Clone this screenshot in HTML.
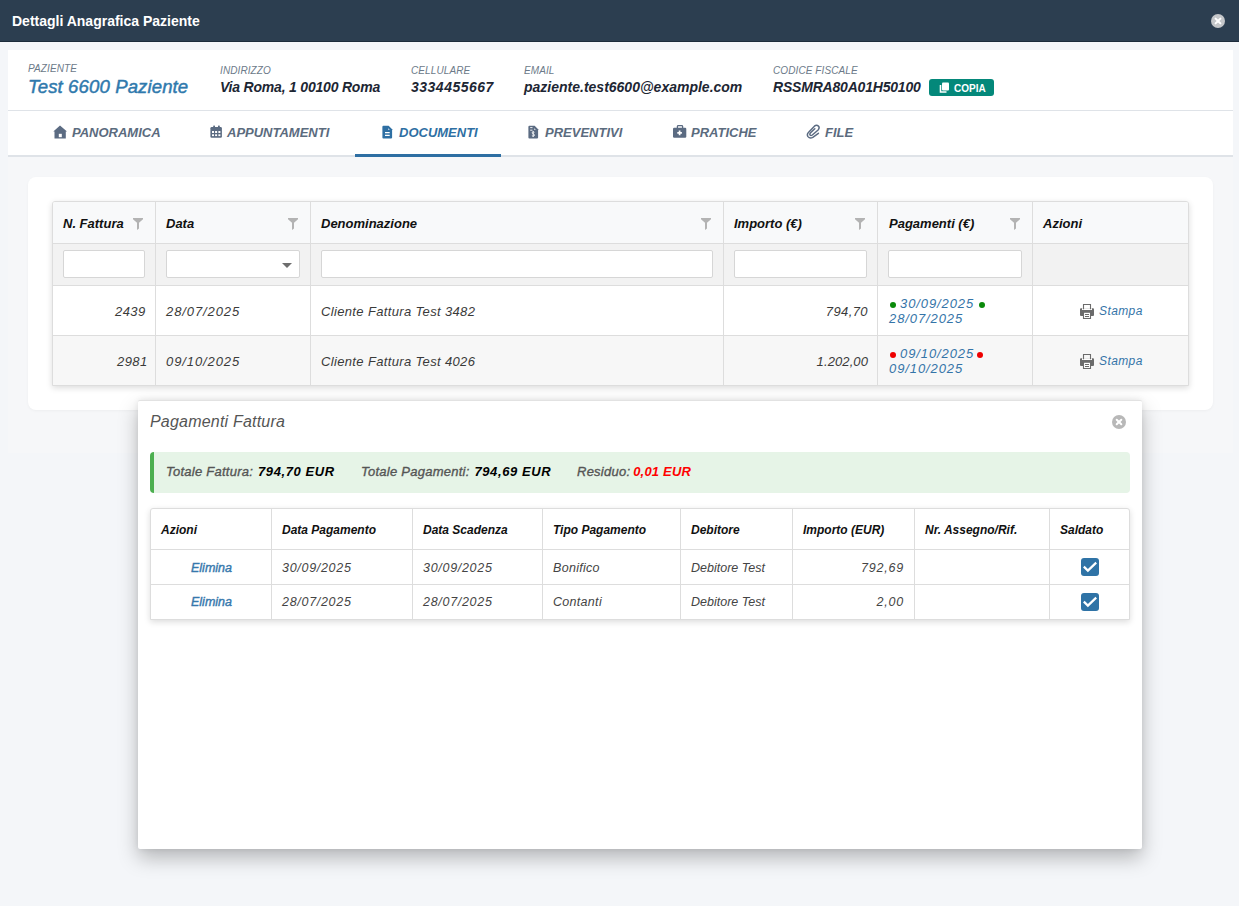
<!DOCTYPE html>
<html><head><meta charset="utf-8">
<style>
*{box-sizing:border-box;margin:0;padding:0}
html,body{width:1239px;height:906px;overflow:hidden}
body{background:#f4f6f9;font-family:"Liberation Sans",sans-serif;position:relative;color:#222}
.a{position:absolute;white-space:nowrap}
svg{position:absolute;display:block}
#hdr{left:0;top:0;width:1239px;height:42px;background:#2c3e50;border-bottom:1px solid #1c2b3a}
.lbl{font-size:10px;line-height:10px;font-style:italic;color:#6c7a89;text-transform:uppercase;letter-spacing:0.1px}
.val{font-size:14px;line-height:14px;font-style:italic;font-weight:bold;color:#1d2633}
.tab{font-size:13px;line-height:13px;font-style:italic;font-weight:bold;color:#5b6b7e;top:126px}
.th{font-size:13px;line-height:13px;font-style:italic;font-weight:bold;color:#111;top:217px}
.td{font-size:13px;line-height:13px;font-style:italic;color:#3a3a3a;letter-spacing:0.4px}
.lnk{color:#3474a8 !important}
.vl{width:1px;background:#dddddd}
.hl{height:1px;background:#dddddd}
.inp{background:#fff;border:1px solid #d6d6d6;border-radius:2px;height:28px;top:250px}
.mth{font-size:12px;line-height:12px;font-style:italic;font-weight:bold;color:#111;top:524px}
.mtd{font-size:12.5px;line-height:13px;font-style:italic;color:#444;letter-spacing:0.3px}
</style></head><body>
<!-- header -->
<div id="hdr" class="a"></div>
<div class="a" style="left:12px;top:14px;font-size:14px;line-height:14px;font-weight:bold;color:#fff">Dettagli Anagrafica Paziente</div>
<svg style="left:1210px;top:13px" width="16" height="16" viewBox="0 0 16 16"><circle cx="8" cy="8" r="7" fill="#c4c6c9"/><path d="M5.6 5.6L10.4 10.4M10.4 5.6L5.6 10.4" stroke="#fff" stroke-width="2" stroke-linecap="round"/></svg>

<!-- patient card -->
<div class="a" style="left:8px;top:50px;width:1225px;height:107px;background:#fff"></div>
<div class="a" style="left:8px;top:110px;width:1225px;height:1px;background:#dfe3e8"></div>
<div class="a" style="left:8px;top:155px;width:1225px;height:2px;background:#dfe3e8"></div>
<div class="a" style="left:355px;top:154px;width:146px;height:3px;background:#2e6fa3"></div>

<div class="a lbl" style="left:28px;top:64px">Paziente</div>
<div class="a" style="left:28px;top:77px;font-size:18.6px;line-height:19px;font-style:italic;color:#2f79ad;-webkit-text-stroke:0.45px #2f79ad;letter-spacing:0.1px">Test 6600 Paziente</div>
<div class="a lbl" style="left:220px;top:66px">Indirizzo</div>
<div class="a val" style="left:220px;top:80px;letter-spacing:-0.2px">Via Roma, 1 00100 Roma</div>
<div class="a lbl" style="left:411px;top:66px">Cellulare</div>
<div class="a val" style="left:411px;top:80px;letter-spacing:0.5px">3334455667</div>
<div class="a lbl" style="left:524px;top:66px">Email</div>
<div class="a val" style="left:524px;top:80px">paziente.test6600@example.com</div>
<div class="a lbl" style="left:773px;top:66px">Codice Fiscale</div>
<div class="a val" style="left:773px;top:80px;letter-spacing:-0.2px">RSSMRA80A01H50100</div>
<div class="a" style="left:929px;top:79px;width:65px;height:17px;background:#04887a;border-radius:3px"></div>
<svg style="left:939px;top:82px" width="11" height="11" viewBox="0 0 11 11"><rect x="3" y="0.5" width="7" height="8" rx="1" fill="#fff"/><path d="M1.5 3v7h6" fill="none" stroke="#fff" stroke-width="1.6"/></svg>
<div class="a" style="left:954px;top:84px;font-size:10px;line-height:10px;font-weight:bold;color:#fff">COPIA</div>

<!-- tabs -->
<svg style="left:53px;top:125px" width="15" height="14" viewBox="0 0 15 14"><path d="M7 0.5L0.3 6.5H1.5V13.5H12.8V6.5H14L7 0.5Z" fill="#5b6b82"/><rect x="5.8" y="8.8" width="3" height="3.4" fill="#fff"/></svg>
<div class="a tab" style="left:72px">PANORAMICA</div>
<svg style="left:210px;top:125px" width="12" height="13" viewBox="0 0 12 13"><rect x="0.4" y="2" width="11.5" height="10.8" rx="1.3" fill="#5b6b82"/><rect x="3.2" y="0.4" width="1.8" height="3" rx="0.6" fill="#5b6b82"/><rect x="8" y="0.4" width="1.8" height="3" rx="0.6" fill="#5b6b82"/><g fill="#fff"><rect x="2" y="6" width="2" height="2"/><rect x="5.1" y="6" width="2" height="2"/><rect x="8.4" y="6" width="2" height="2"/><rect x="2" y="9.3" width="2" height="1.8"/><rect x="5.1" y="9.3" width="2" height="1.8"/><rect x="8.4" y="9.3" width="2" height="1.8"/></g></svg>
<div class="a tab" style="left:227px">APPUNTAMENTI</div>
<svg style="left:382px;top:125px" width="11" height="14" viewBox="0 0 11 14"><path d="M1.4 0.8H6.6L10.1 4.3V12.4Q10.1 13.5 9 13.5H1.4Q0.4 13.5 0.4 12.4V1.9Q0.4 0.8 1.4 0.8Z" fill="#2e6fa3"/><path d="M6.2 3.2L7.8 4.7H6.2Z" fill="#fff"/><path d="M3 7.6h4.7M3 10.4h4.7" stroke="#fff" stroke-width="1.1"/></svg>
<div class="a tab" style="left:399px;color:#2e6fa3">DOCUMENTI</div>
<svg style="left:528px;top:125px" width="11" height="14" viewBox="0 0 11 14"><path d="M1.4 0.8H6.6L10.1 4.3V12.4Q10.1 13.5 9 13.5H1.4Q0.4 13.5 0.4 12.4V1.9Q0.4 0.8 1.4 0.8Z" fill="#5b6b82"/><path d="M6.2 3.2L7.8 4.7H6.2Z" fill="#fff"/><path d="M2.2 2.6h2.3M2.2 5.2h2.3" stroke="#fff" stroke-width="0.9"/><path d="M6.4 7.3Q5.6 6.7 4.8 6.9Q3.9 7.2 4.2 8.1Q4.5 8.7 5.5 9Q6.6 9.4 6.4 10.4Q6.1 11.2 5 11.1Q4.3 11 3.9 10.6M5.2 6.2v5.7" stroke="#fff" stroke-width="0.9" fill="none"/></svg>
<div class="a tab" style="left:545px">PREVENTIVI</div>
<svg style="left:673px;top:125px" width="14" height="13" viewBox="0 0 14 13"><path d="M4.4 3V1.6Q4.4 0.6 5.4 0.6H8.6Q9.6 0.6 9.6 1.6V3" fill="none" stroke="#5b6b82" stroke-width="1.3"/><rect x="0" y="2.8" width="13.3" height="10" rx="1.2" fill="#5b6b82"/><path d="M6.6 5.6v4.6M4.3 7.9h4.6" stroke="#fff" stroke-width="1.7"/></svg>
<div class="a tab" style="left:691px">PRATICHE</div>
<svg style="left:806px;top:124px" width="14" height="15" viewBox="0 0 14 15"><path d="M12.4 9.3L6.8 13.3Q3.9 15 2 12.6Q0.5 10.2 2.6 8.2L8.4 2.2Q10.6 0.4 12.4 2.1Q14 4 12.1 6L6.3 11Q4.9 12 4.1 11Q3.4 10 4.6 8.8L8.8 4.8" fill="none" stroke="#5b6b82" stroke-width="1.5" stroke-linecap="round"/></svg>
<div class="a tab" style="left:825px">FILE</div>

<!-- content area -->
<div class="a" style="left:8px;top:157px;width:1225px;height:296px;background:#f6f7f9"></div>
<div class="a" style="left:28px;top:177px;width:1185px;height:233px;background:#fff;border-radius:8px;box-shadow:0 1px 3px rgba(0,0,0,0.04)"></div>

<!-- main table -->
<div class="a" style="left:52px;top:201px;width:1137px;height:185px;border:1px solid #dddddd;border-radius:3px 3px 0 0;background:#fff;box-shadow:0 2px 6px rgba(0,0,0,0.14);overflow:hidden">
  <div class="a" style="left:0;top:0;width:1137px;height:42px;background:#f8f9fa"></div>
  <div class="a" style="left:0;top:42px;width:1137px;height:42px;background:#f2f2f2"></div>
  <div class="a" style="left:0;top:134px;width:1137px;height:50px;background:#f7f7f7"></div>
  <div class="a hl" style="left:0;top:41px;width:1137px"></div>
  <div class="a hl" style="left:0;top:83px;width:1137px"></div>
  <div class="a hl" style="left:0;top:133px;width:1137px"></div>
  <div class="a vl" style="left:102px;top:0;height:184px"></div>
  <div class="a vl" style="left:257px;top:0;height:184px"></div>
  <div class="a vl" style="left:670px;top:0;height:184px"></div>
  <div class="a vl" style="left:824px;top:0;height:184px"></div>
  <div class="a vl" style="left:979px;top:0;height:184px"></div>
</div>
<div class="a th" style="left:63px">N. Fattura</div>
<div class="a th" style="left:166px">Data</div>
<div class="a th" style="left:321px">Denominazione</div>
<div class="a th" style="left:734px">Importo (€)</div>
<div class="a th" style="left:889px">Pagamenti (€)</div>
<div class="a th" style="left:1043px">Azioni</div>
<svg style="left:133px;top:218px" width="10" height="12" viewBox="0 0 10 12"><path d="M0 0H10V1.2L6 4.7V10.5L4 12V4.7L0 1.2Z" fill="#b3b3b3"/></svg>
<svg style="left:288px;top:218px" width="10" height="12" viewBox="0 0 10 12"><path d="M0 0H10V1.2L6 4.7V10.5L4 12V4.7L0 1.2Z" fill="#b3b3b3"/></svg>
<svg style="left:701px;top:218px" width="10" height="12" viewBox="0 0 10 12"><path d="M0 0H10V1.2L6 4.7V10.5L4 12V4.7L0 1.2Z" fill="#b3b3b3"/></svg>
<svg style="left:855px;top:218px" width="10" height="12" viewBox="0 0 10 12"><path d="M0 0H10V1.2L6 4.7V10.5L4 12V4.7L0 1.2Z" fill="#b3b3b3"/></svg>
<svg style="left:1010px;top:218px" width="10" height="12" viewBox="0 0 10 12"><path d="M0 0H10V1.2L6 4.7V10.5L4 12V4.7L0 1.2Z" fill="#b3b3b3"/></svg>

<div class="a inp" style="left:63px;width:82px"></div>
<div class="a inp" style="left:166px;width:134px"></div>
<svg style="left:282px;top:263px" width="10" height="5" viewBox="0 0 10 5"><path d="M0 0H10L5 5Z" fill="#6e6e6e"/></svg>
<div class="a inp" style="left:321px;width:392px"></div>
<div class="a inp" style="left:734px;width:133px"></div>
<div class="a inp" style="left:888px;width:134px"></div>

<!-- rows -->
<div class="a td" style="left:115px;top:305px">2439</div>
<div class="a td" style="left:166px;top:305px;letter-spacing:0.9px">28/07/2025</div>
<div class="a td" style="left:321px;top:305px;letter-spacing:0.35px">Cliente Fattura Test 3482</div>
<div class="a td" style="right:371px;top:305px">794,70</div>
<div class="a" style="left:890px;top:302px;width:6px;height:6px;border-radius:50%;background:#0a8a0a"></div>
<div class="a td lnk" style="left:900px;top:297px;letter-spacing:0.9px">30/09/2025</div>
<div class="a" style="left:979px;top:302px;width:6px;height:6px;border-radius:50%;background:#0a8a0a"></div>
<div class="a td lnk" style="left:889px;top:312px;letter-spacing:0.9px">28/07/2025</div>
<svg style="left:1080px;top:304px" width="14" height="15" viewBox="0 0 14 15"><rect x="0" y="4.2" width="14" height="7.8" rx="1" fill="#6b6b6b"/><rect x="2" y="4.2" width="10" height="1.8" fill="#fff"/><path d="M3.5 5.2V0.5H10.5V5.2" fill="none" stroke="#6b6b6b" stroke-width="1.1"/><rect x="3.5" y="8.2" width="7" height="6.3" fill="#fff" stroke="#6b6b6b" stroke-width="1.1"/><path d="M5 10.5h4M5 12.5h4" stroke="#6b6b6b" stroke-width="1"/></svg>
<div class="a td lnk" style="left:1099px;top:305px;font-size:12px;letter-spacing:0.4px">Stampa</div>

<div class="a td" style="left:117px;top:355px">2981</div>
<div class="a td" style="left:166px;top:355px;letter-spacing:0.9px">09/10/2025</div>
<div class="a td" style="left:321px;top:355px;letter-spacing:0.35px">Cliente Fattura Test 4026</div>
<div class="a td" style="right:371px;top:355px;letter-spacing:0.1px">1.202,00</div>
<div class="a" style="left:890px;top:352px;width:6px;height:6px;border-radius:50%;background:#ee0000"></div>
<div class="a td lnk" style="left:900px;top:347px;letter-spacing:0.9px">09/10/2025</div>
<div class="a" style="left:977px;top:352px;width:6px;height:6px;border-radius:50%;background:#ee0000"></div>
<div class="a td lnk" style="left:889px;top:362px;letter-spacing:0.9px">09/10/2025</div>
<svg style="left:1080px;top:354px" width="14" height="15" viewBox="0 0 14 15"><rect x="0" y="4.2" width="14" height="7.8" rx="1" fill="#6b6b6b"/><rect x="2" y="4.2" width="10" height="1.8" fill="#fff"/><path d="M3.5 5.2V0.5H10.5V5.2" fill="none" stroke="#6b6b6b" stroke-width="1.1"/><rect x="3.5" y="8.2" width="7" height="6.3" fill="#fff" stroke="#6b6b6b" stroke-width="1.1"/><path d="M5 10.5h4M5 12.5h4" stroke="#6b6b6b" stroke-width="1"/></svg>
<div class="a td lnk" style="left:1099px;top:355px;font-size:12px;letter-spacing:0.4px">Stampa</div>

<!-- modal -->
<div class="a" style="left:138px;top:400px;width:1004px;height:449px;background:#fff;border-top:1px solid #e2e2e2;border-radius:2px;box-shadow:0 9px 20px rgba(0,0,0,0.26),0 0 6px rgba(0,0,0,0.08)"></div>
<div class="a" style="left:150px;top:414px;font-size:16px;line-height:16px;font-style:italic;color:#555;letter-spacing:0.2px">Pagamenti Fattura</div>
<svg style="left:1111px;top:414px" width="16" height="16" viewBox="0 0 16 16"><circle cx="8" cy="8" r="7" fill="#b8b8b8"/><path d="M5.7 5.7L10.3 10.3M10.3 5.7L5.7 10.3" stroke="#fff" stroke-width="2" stroke-linecap="round"/></svg>

<div class="a" style="left:150px;top:452px;width:980px;height:41px;background:#e6f4e7;border-left:4px solid #4caf50;border-radius:4px"></div>
<div class="a" style="left:166px;top:465px;font-size:13px;line-height:13px;font-style:italic;color:#555;-webkit-text-stroke:0.35px #555;letter-spacing:0.25px">Totale Fattura: <b style="color:#000;-webkit-text-stroke:0;letter-spacing:0.6px;margin-left:1px">794,70 EUR</b></div>
<div class="a" style="left:361px;top:465px;font-size:13px;line-height:13px;font-style:italic;color:#555;-webkit-text-stroke:0.35px #555;letter-spacing:0.25px">Totale Pagamenti: <b style="color:#000;-webkit-text-stroke:0;letter-spacing:0.6px;margin-left:1px">794,69 EUR</b></div>
<div class="a" style="left:577px;top:465px;font-size:13px;line-height:13px;font-style:italic;color:#555;-webkit-text-stroke:0.35px #555;letter-spacing:0.25px">Residuo: <b style="color:#f00;-webkit-text-stroke:0;letter-spacing:0.2px;margin-left:-1px">0,01 EUR</b></div>

<!-- modal table -->
<div class="a" style="left:150px;top:508px;width:980px;height:112px;border:1px solid #dddddd;border-radius:3px 3px 0 0;background:#fff;box-shadow:0 2px 6px rgba(0,0,0,0.14);overflow:hidden">
  <div class="a hl" style="left:0;top:40px;width:980px"></div>
  <div class="a hl" style="left:0;top:75px;width:980px"></div>
  <div class="a vl" style="left:120px;top:0;height:112px"></div>
  <div class="a vl" style="left:261px;top:0;height:112px"></div>
  <div class="a vl" style="left:391px;top:0;height:112px"></div>
  <div class="a vl" style="left:529px;top:0;height:112px"></div>
  <div class="a vl" style="left:641px;top:0;height:112px"></div>
  <div class="a vl" style="left:763px;top:0;height:112px"></div>
  <div class="a vl" style="left:898px;top:0;height:112px"></div>
</div>
<div class="a mth" style="left:161px">Azioni</div>
<div class="a mth" style="left:282px">Data Pagamento</div>
<div class="a mth" style="left:423px">Data Scadenza</div>
<div class="a mth" style="left:553px">Tipo Pagamento</div>
<div class="a mth" style="left:691px">Debitore</div>
<div class="a mth" style="left:803px">Importo (EUR)</div>
<div class="a mth" style="left:925px">Nr. Assegno/Rif.</div>
<div class="a mth" style="left:1060px">Saldato</div>

<div class="a mtd lnk" style="left:191px;top:562px;-webkit-text-stroke:0.4px #3a7cb0;letter-spacing:0">Elimina</div>
<div class="a mtd" style="left:282px;top:562px;letter-spacing:0.7px">30/09/2025</div>
<div class="a mtd" style="left:423px;top:562px;letter-spacing:0.7px">30/09/2025</div>
<div class="a mtd" style="left:553px;top:562px">Bonifico</div>
<div class="a mtd" style="left:691px;top:562px;letter-spacing:0">Debitore Test</div>
<div class="a mtd" style="right:335px;top:562px;letter-spacing:0.8px">792,69</div>
<svg style="left:1081px;top:558px" width="18" height="18" viewBox="0 0 18 18"><rect width="18" height="18" rx="3" fill="#2f73a6"/><path d="M2.8 8.6L6.9 12.6L15.2 4.6" fill="none" stroke="#fff" stroke-width="2.2"/></svg>

<div class="a mtd lnk" style="left:191px;top:596px;-webkit-text-stroke:0.4px #3a7cb0;letter-spacing:0">Elimina</div>
<div class="a mtd" style="left:282px;top:596px;letter-spacing:0.7px">28/07/2025</div>
<div class="a mtd" style="left:423px;top:596px;letter-spacing:0.7px">28/07/2025</div>
<div class="a mtd" style="left:553px;top:596px">Contanti</div>
<div class="a mtd" style="left:691px;top:596px;letter-spacing:0">Debitore Test</div>
<div class="a mtd" style="right:335px;top:596px;letter-spacing:0.8px">2,00</div>
<svg style="left:1081px;top:593px" width="18" height="18" viewBox="0 0 18 18"><rect width="18" height="18" rx="3" fill="#2f73a6"/><path d="M2.8 8.6L6.9 12.6L15.2 4.6" fill="none" stroke="#fff" stroke-width="2.2"/></svg>

</body></html>
